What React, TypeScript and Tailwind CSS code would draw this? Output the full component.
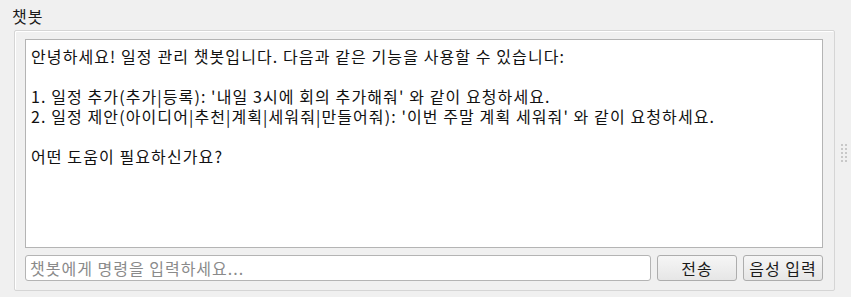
import React, { useState } from "react";

const lines = [
  "안녕하세요! 일정 관리 챗봇입니다. 다음과 같은 기능을 사용할 수 있습니다:",
  "",
  "1. 일정 추가(추가|등록): '내일 3시에 회의 추가해줘' 와 같이 요청하세요.",
  "2. 일정 제안(아이디어|추천|계획|세워줘|만들어줘): '이번 주말 계획 세워줘' 와 같이 요청하세요.",
  "",
  "어떤 도움이 필요하신가요?",
];

function QtButton({ label }: { label: string }) {
  return (
    <button className="w-[80px] h-[26px] rounded-[3px] border border-[#adadad] bg-gradient-to-b from-[#f6f6f6] to-[#e6e6e6] text-[16px] tracking-[1px] text-[#1a1a1a] leading-none">
      {label}
    </button>
  );
}

export default function App() {
  const [message, setMessage] = useState("");

  return (
    <div
      className="relative w-[851px] h-[297px] bg-[#f0f0f0] flex flex-col"
      style={{ fontFamily: '"Noto Sans CJK KR", "Malgun Gothic", sans-serif' }}
    >
      <div className="pl-[12px] pt-[6px] h-[30px] text-[16px] tracking-[1px] leading-[20px] text-[#1a1a1a]">
        챗봇
      </div>

      <div className="ml-[14px] mr-[16px] h-[261px] border border-[#d5d5d5] rounded-[2px] shadow-[inset_1px_1px_0_#ffffff] flex flex-col pl-[10px] pr-[11px] pt-[8px] pb-[8px]">
        <div className="h-[209px] bg-white border border-[#b4b4b4] px-[5px] pt-[6px] text-[16px] tracking-[1.1px] leading-[20px] text-[#111]">
          {lines.map((line, i) => (
            <div key={i} className="h-[20px] whitespace-pre">
              {line}
            </div>
          ))}
        </div>

        <div className="flex gap-[6px] mt-[7px] h-[26px]">
          <input
            value={message}
            onChange={(e) => setMessage(e.target.value)}
            placeholder="챗봇에게 명령을 입력하세요..."
            className="flex-1 h-[26px] bg-white border border-[#b4b4b4] rounded-[3px] px-[4px] text-[16px] tracking-[1px] text-[#111] placeholder:text-[#8a8a8a] outline-none"
          />
          <QtButton label="전송" />
          <QtButton label="음성 입력" />
        </div>
      </div>

      {/* splitter grip */}
      <div className="absolute left-[841px] top-[144px] grid grid-cols-2 gap-[2px]">
        {Array.from({ length: 10 }).map((_, i) => (
          <span key={i} className="w-[2px] h-[2px] bg-[#c8c8c8]" />
        ))}
      </div>
    </div>
  );
}
